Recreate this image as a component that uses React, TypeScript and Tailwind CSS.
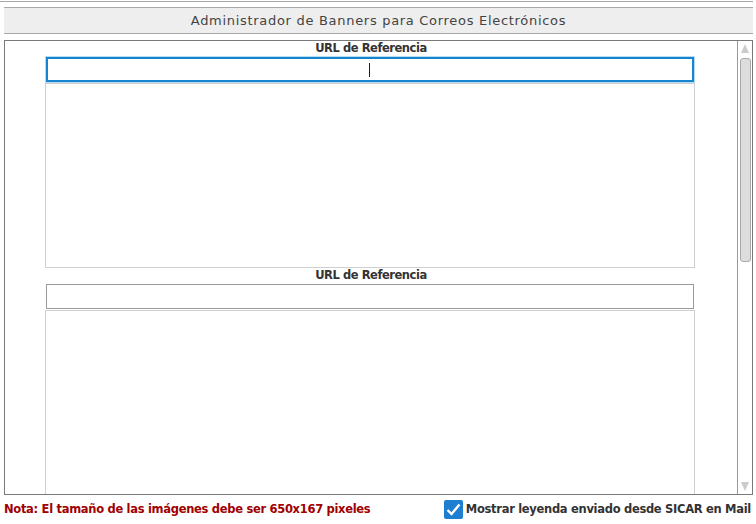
import React from 'react';

const font = { fontFamily: '"DejaVu Sans", Verdana, sans-serif' };

function BannerSlot({ focused }: { focused?: boolean }) {
  return (
    <div className="flex flex-col">
      <div className="h-[16px] text-center text-[11.5px] font-bold leading-[15px] tracking-[-0.45px] text-[#333]">URL de Referencia</div>
      {focused ? (
        <div className="ml-[41px] flex h-[25px] w-[648px] items-center justify-center border-2 border-[#1685d0] bg-white shadow-[0_0_0_1px_#b6dbf2]">
          <span className="ml-[-2px] h-[14px] w-px bg-[#10108a]" />
        </div>
      ) : (
        <div className="ml-[41px] h-[25px] w-[648px] border border-[#9a9a9a] bg-white" />
      )}
      <div className="ml-[40px] mt-px h-[185px] w-[650px] shrink-0 border border-[#cfcfcf] bg-white" />
    </div>
  );
}

export default function App() {
  return (
    <div className="h-[524px] w-[756px] overflow-hidden bg-white" style={font}>
      <div className="mt-px h-px w-[753px] bg-[#a9a9a9]" />

      <div className="ml-[4px] mt-[5px] flex h-[27px] w-[749px] items-center justify-center border-y border-[#a9a9a9] bg-[#eeeeee] text-[13px] tracking-[0.7px] text-[#444]">
        Administrador de Banners para Correos Electrónicos
      </div>

      {/* Banner list */}
      <div className="ml-[4px] mt-[6px] flex h-[455px] w-[749px] border border-[#7a7a7a]">
        <div className="flex w-[732px] flex-col overflow-hidden">
          <BannerSlot focused />
          <BannerSlot />
        </div>
        <div className="flex w-[15px] flex-col items-center border-l border-[#9a9a9a] bg-white">
          <div className="mt-[3px] h-0 w-0 border-x-[4px] border-b-[9px] border-x-transparent border-b-[#cccccc]" />
          <div className="mt-[5px] h-[204px] w-[11px] rounded-[3px] border border-[#a9a9a9] bg-[#dddddd]" />
          <div className="flex-1" />
          <div className="mb-[3px] h-0 w-0 border-x-[4px] border-t-[9px] border-x-transparent border-t-[#cccccc]" />
        </div>
      </div>

      <div className="flex h-[29px] items-center justify-between pl-[4px] pr-[5px] text-[11.5px] font-bold tracking-[-0.3px]">
        <span className="text-[#a00000]">Nota: El tamaño de las imágenes debe ser 650x167 pixeles</span>
        <label className="flex items-center gap-[3px] text-[#333]">
          <span className="flex h-[19px] w-[19px] items-center justify-center rounded-[2px] bg-[#1e7fd0]">
            <svg width="15" height="13" viewBox="0 0 15 13">
              <path d="M1.5 7 L5.5 11 L13.5 1.5" fill="none" stroke="white" strokeWidth="2.4" />
            </svg>
          </span>
          Mostrar leyenda enviado desde SICAR en Mail
        </label>
      </div>
    </div>
  );
}
